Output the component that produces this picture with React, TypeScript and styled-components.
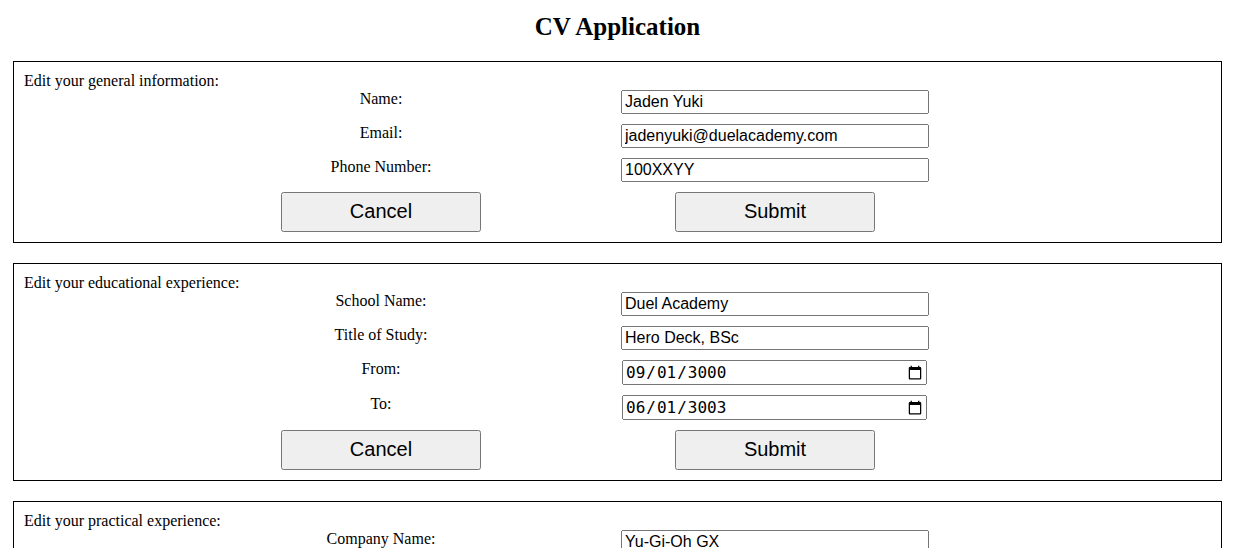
import React from "react";
import styled, { createGlobalStyle } from "styled-components";

const GlobalStyle = createGlobalStyle`
  html { scrollbar-width: none; }
  body {
    margin: 0;
    background: #ffffff;
    color: #000000;
    font-family: "Liberation Serif", "Times New Roman", serif;
    font-size: 16px;
  }
`;

const Page = styled.div`
  padding: 0 16px 0 13px;
`;

const Title = styled.h1`
  margin: 12px 0 20px;
  font-size: 25px;
  line-height: 29px;
  font-weight: bold;
  text-align: center;
`;

const Section = styled.section`
  border: 1px solid #000000;
  padding: 10px;
  margin-bottom: 20px;
`;

const SectionHeading = styled.div`
  margin: 0;
`;

const FormGrid = styled.form`
  display: grid;
  grid-template-columns: 394px 394px;
  margin-left: 160px;
  row-gap: 10px;
  justify-items: center;
  align-items: start;
`;

const Label = styled.label`
  font-size: 16px;
`;

const TextInput = styled.input`
  width: 300px;
  font-family: "Liberation Sans", Arial, sans-serif;
  font-size: 16px;
  color: #000000;
`;

const DateInput = styled.input`
  width: 300px;
  margin-right: 1px;
  font-family: "DejaVu Sans Mono", monospace;
  font-size: 16px;
  color: #000000;
`;

const Button = styled.button`
  width: 200px;
  height: 40px;
  padding: 0 6px 2px;
  font-family: "Liberation Sans", Arial, sans-serif;
  font-size: 20px;
  color: #000000;
`;

type Field = { label: string; value: string; type?: "text" | "date" };

const sections: { heading: string; fields: Field[] }[] = [
  {
    heading: "Edit your general information:",
    fields: [
      { label: "Name:", value: "Jaden Yuki" },
      { label: "Email:", value: "jadenyuki@duelacademy.com" },
      { label: "Phone Number:", value: "100XXYY" },
    ],
  },
  {
    heading: "Edit your educational experience:",
    fields: [
      { label: "School Name:", value: "Duel Academy" },
      { label: "Title of Study:", value: "Hero Deck, BSc" },
      { label: "From:", value: "3000-09-01", type: "date" },
      { label: "To:", value: "3003-06-01", type: "date" },
    ],
  },
  {
    heading: "Edit your practical experience:",
    fields: [
      { label: "Company Name:", value: "Yu-Gi-Oh GX" },
      { label: "Position Title:", value: "Pro Duelist" },
      { label: "Main Responsibilities:", value: "Dueling with Elemental HEROes" },
      { label: "From:", value: "3003-07-01", type: "date" },
      { label: "To:", value: "3008-07-01", type: "date" },
    ],
  },
];

export default function App() {
  return (
    <>
      <GlobalStyle />
      <Page>
        <Title>CV Application</Title>
        {sections.map((s, si) => (
          <Section key={si}>
            <SectionHeading>{s.heading}</SectionHeading>
            <FormGrid onSubmit={(e) => e.preventDefault()}>
              {s.fields.map((f, fi) => {
                const id = `f-${si}-${fi}`;
                return (
                  <React.Fragment key={id}>
                    <Label htmlFor={id}>{f.label}</Label>
                    {f.type === "date" ? (
                      <DateInput id={id} type="date" defaultValue={f.value} />
                    ) : (
                      <TextInput id={id} type="text" defaultValue={f.value} />
                    )}
                  </React.Fragment>
                );
              })}
              <Button type="button">Cancel</Button>
              <Button type="submit">Submit</Button>
            </FormGrid>
          </Section>
        ))}
      </Page>
    </>
  );
}
